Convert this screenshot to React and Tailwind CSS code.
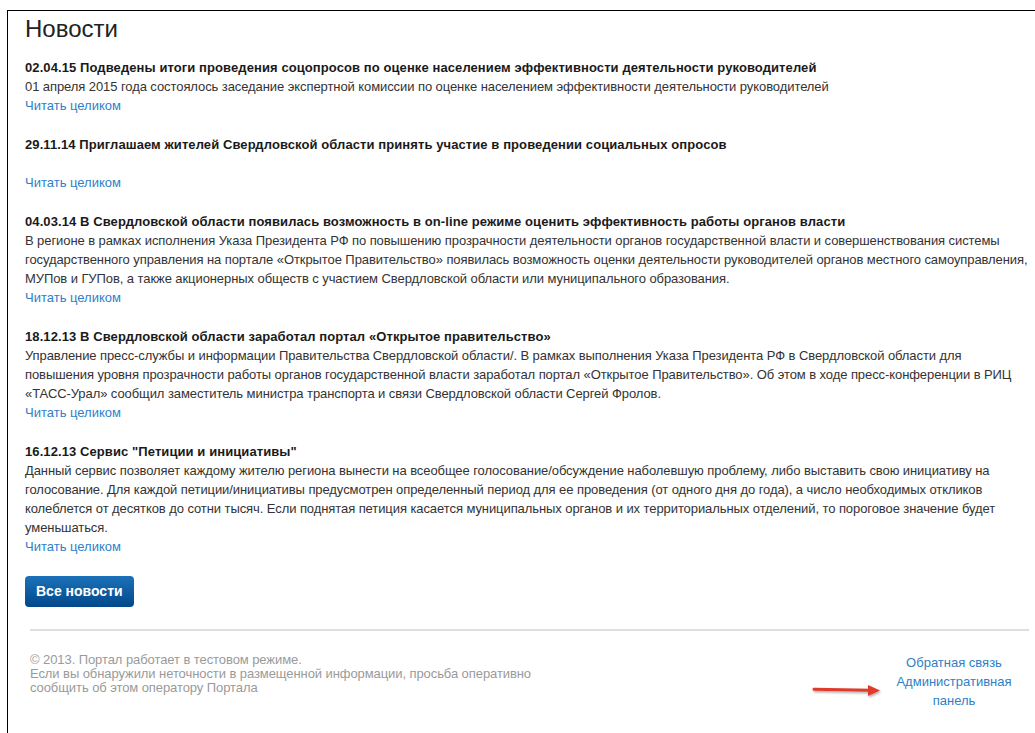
import React from 'react';

const news = [
  {
    date: '02.04.15',
    title: 'Подведены итоги проведения соцопросов по оценке населением эффективности деятельности руководителей',
    text: '01 апреля 2015 года состоялось заседание экспертной комиссии по оценке населением эффективности деятельности руководителей',
  },
  {
    date: '29.11.14',
    title: 'Приглашаем жителей Свердловской области принять участие в проведении социальных опросов',
    text: '',
  },
  {
    date: '04.03.14',
    title: 'В Свердловской области появилась возможность в on-line режиме оценить эффективность работы органов власти',
    text: 'В регионе в рамках исполнения Указа Президента РФ по повышению прозрачности деятельности органов государственной власти и совершенствования системы государственного управления на портале «Открытое Правительство» появилась возможность оценки деятельности руководителей органов местного самоуправления, МУПов и ГУПов, а также акционерных обществ с участием Свердловской области или муниципального образования.',
  },
  {
    date: '18.12.13',
    title: 'В Свердловской области заработал портал «Открытое правительство»',
    text: 'Управление пресс-службы и информации Правительства Свердловской области/. В рамках выполнения Указа Президента РФ в Свердловской области для повышения уровня прозрачности работы органов государственной власти заработал портал «Открытое Правительство». Об этом в ходе пресс-конференции в РИЦ «ТАСС-Урал» сообщил заместитель министра транспорта и связи Свердловской области Сергей Фролов.',
  },
  {
    date: '16.12.13',
    title: 'Сервис "Петиции и инициативы"',
    text: 'Данный сервис позволяет каждому жителю региона вынести на всеобщее голосование/обсуждение наболевшую проблему, либо выставить свою инициативу на голосование. Для каждой петиции/инициативы предусмотрен определенный период для ее проведения (от одного дня до года), а число необходимых откликов колеблется от десятков до сотни тысяч. Если поднятая петиция касается муниципальных органов и их территориальных отделений, то пороговое значение будет уменьшаться.',
  },
];

const NewsItem = ({ item }) => (
  <div className="mb-[20px] text-[13px] leading-[19px]">
    <div className="font-bold tracking-[0.09px] text-[#1a1a1a]">
      {item.date} {item.title}
    </div>
    <div className="min-h-[19px] tracking-[-0.08px] text-[#333]">{item.text}</div>
    <a href="#" className="text-[#2f7fc8]">Читать целиком</a>
  </div>
);

const App = () => {
  return (
    <div className="relative h-[733px] w-[1035px] overflow-hidden bg-white font-['Liberation_Sans',Arial,sans-serif]">
      <div className="ml-[7px] mt-[10px] h-[723px] border-l border-t border-black pl-[17px] pr-[4px] pt-[4px]">
        <h1 className="mb-[15px] text-[24px] leading-[28px] text-[#222]">Новости</h1>

        {news.map((item) => (
          <NewsItem key={item.date} item={item} />
        ))}

        {/* Все новости */}
        <button className="h-[31px] rounded-[4px] bg-gradient-to-b from-[#1b72ba] to-[#03488a] px-[11px] text-[14px] font-bold text-white">
          Все новости
        </button>

        <div className="ml-[5px] mr-[2px] mt-[22px] border-t-2 border-[#dedede]" />

        {/* footer */}
        <div className="ml-[5px] mr-[12px] mt-[22px] flex justify-between">
          <div className="text-[13px] leading-[14px] tracking-[-0.08px] text-[#9a9a9a]">
            © 2013. Портал работает в тестовом режиме.
            <br />
            Если вы обнаружили неточности в размещенной информации, просьба оперативно
            <br />
            сообщить об этом оператору Портала
          </div>
          <div className="w-[130px] text-center text-[13px] leading-[19px] text-[#2f7fc8]">
            <a href="#" className="block">Обратная связь</a>
            <a href="#" className="block">Административная панель</a>
          </div>
        </div>
      </div>

      {/* pointer arrow */}
      <svg className="absolute left-[810px] top-[681px]" width="76" height="20" viewBox="0 0 76 20">
        <defs>
          <filter id="arrowShadow" x="-10%" y="-50%" width="130%" height="220%">
            <feDropShadow dx="1" dy="1.5" stdDeviation="1" floodColor="#000" floodOpacity="0.35" />
          </filter>
        </defs>
        <g filter="url(#arrowShadow)">
          <path d="M4 8.2 L60 9.2" stroke="#e03a2c" strokeWidth="3" strokeLinecap="round" />
          <path d="M58 4 L70 9.6 L58 15 Z" fill="#e03a2c" />
        </g>
      </svg>
    </div>
  );
};

export default App;
